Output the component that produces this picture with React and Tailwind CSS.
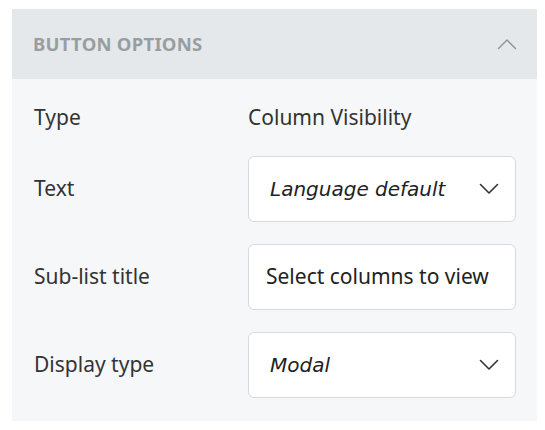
import React from "react";

const sans = { fontFamily: '"Noto Sans", "DejaVu Sans", sans-serif' };

function Chevron({ up, w = "1.6" }) {
  return (
    <svg width="20" height="12" viewBox="0 0 20 12" fill="none" className="shrink-0">
      <path
        d={up ? "M1.5 10.5 L10 2 L18.5 10.5" : "M1.5 1.5 L10 10 L18.5 1.5"}
        stroke="currentColor"
        strokeWidth={w}
        strokeLinecap="round"
        strokeLinejoin="round"
      />
    </svg>
  );
}

function Row({ label, children }) {
  return (
    <div className="flex items-center">
      <div className="w-[214px] shrink-0 text-[21px] text-[#333333]">{label}</div>
      {children}
    </div>
  );
}

function Select({ value }) {
  return (
    <div className="flex h-[66px] w-[268px] items-center justify-between rounded-[6px] border border-[#d6dae0] bg-white pl-[21px] pr-[16px]">
      <span className="text-[20px] italic text-[#222222]" style={{ fontFamily: '"DejaVu Sans", sans-serif' }}>{value}</span>
      <span className="text-[#333333]"><Chevron /></span>
    </div>
  );
}

function Input({ value }) {
  return (
    <div className="flex h-[66px] w-[268px] items-center overflow-hidden whitespace-nowrap rounded-[6px] border border-[#d6dae0] bg-white pl-[17px] text-[21px] text-[#222222]">
      {value}
    </div>
  );
}

export default function App() {
  return (
    <div className="h-[430px] w-[545px] bg-white pl-[12px] pr-[8px] pt-[9px]" style={sans}>
      <div className="w-[525px]">
        <div className="flex h-[70px] items-center justify-between bg-[#e5e8eb] pl-[21px] pr-[20px]">
          <span className="text-[18.5px] font-bold tracking-[0.25px] text-[#989e9f]">BUTTON OPTIONS</span>
          <span className="text-[#8d9393]"><Chevron up w="1.4" /></span>
        </div>
        <div className="flex flex-col gap-[22px] bg-[#f6f7f9] pb-[23px] pl-[22px] pt-[23px]">
          <div className="flex h-[32px] items-center">
            <div className="w-[214px] shrink-0 text-[21px] text-[#333333]">Type</div>
            <div className="text-[21px] text-[#333333]">Column Visibility</div>
          </div>
          <Row label="Text"><Select value="Language default" /></Row>
          <Row label="Sub-list title"><Input value="Select columns to view" /></Row>
          <Row label="Display type"><Select value="Modal" /></Row>
        </div>
      </div>
    </div>
  );
}
